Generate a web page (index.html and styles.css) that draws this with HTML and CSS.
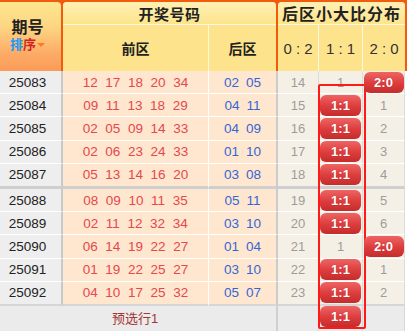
FILE: index.html
```html
<!DOCTYPE html>
<html lang="zh">
<head>
<meta charset="utf-8">
<title>后区小大比分布</title>
<link rel="stylesheet" href="styles.css">
</head>
<body>
<div class="board">
  <div class="head">
    <div class="h-qh">
      <div class="h-qh-title">期号</div>
      <div class="h-sort"><span class="s-blue">排</span><span class="s-red">序</span><span class="tri"></span></div>
    </div>
    <div class="h-group">
      <div class="h-title">开奖号码</div>
      <div class="h-sub">
        <div class="h-cell w-front">前区</div>
        <div class="h-cell w-back">后区</div>
      </div>
    </div>
    <div class="h-group">
      <div class="h-title t-dist">后区小大比分布</div>
      <div class="h-sub">
        <div class="h-cell w-d02 ratio">0 : 2</div>
        <div class="h-cell w-d11 ratio">1 : 1</div>
        <div class="h-cell w-d20 ratio">2 : 0</div>
      </div>
    </div>
  </div>

  <div class="body">
    <div class="row">
      <div class="c-qh">25083</div>
      <div class="c-front"><span>12</span><span>17</span><span>18</span><span>20</span><span>34</span></div>
      <div class="c-back"><span>02</span><span>05</span></div>
      <div class="c-d">14</div>
      <div class="c-d">1</div>
      <div class="c-d"><span class="badge b20">2:0</span></div>
    </div>
    <div class="row">
      <div class="c-qh">25084</div>
      <div class="c-front"><span>09</span><span>11</span><span>13</span><span>18</span><span>29</span></div>
      <div class="c-back"><span>04</span><span>11</span></div>
      <div class="c-d">15</div>
      <div class="c-d"><span class="badge">1:1</span></div>
      <div class="c-d">1</div>
    </div>
    <div class="row">
      <div class="c-qh">25085</div>
      <div class="c-front"><span>02</span><span>05</span><span>09</span><span>14</span><span>33</span></div>
      <div class="c-back"><span>04</span><span>09</span></div>
      <div class="c-d">16</div>
      <div class="c-d"><span class="badge">1:1</span></div>
      <div class="c-d">2</div>
    </div>
    <div class="row">
      <div class="c-qh">25086</div>
      <div class="c-front"><span>02</span><span>06</span><span>23</span><span>24</span><span>33</span></div>
      <div class="c-back"><span>01</span><span>10</span></div>
      <div class="c-d">17</div>
      <div class="c-d"><span class="badge">1:1</span></div>
      <div class="c-d">3</div>
    </div>
    <div class="row sep">
      <div class="c-qh">25087</div>
      <div class="c-front"><span>05</span><span>13</span><span>14</span><span>16</span><span>20</span></div>
      <div class="c-back"><span>03</span><span>08</span></div>
      <div class="c-d">18</div>
      <div class="c-d"><span class="badge">1:1</span></div>
      <div class="c-d">4</div>
    </div>
    <div class="row">
      <div class="c-qh">25088</div>
      <div class="c-front"><span>08</span><span>09</span><span>10</span><span>11</span><span>35</span></div>
      <div class="c-back"><span>05</span><span>11</span></div>
      <div class="c-d">19</div>
      <div class="c-d"><span class="badge">1:1</span></div>
      <div class="c-d">5</div>
    </div>
    <div class="row">
      <div class="c-qh">25089</div>
      <div class="c-front"><span>02</span><span>11</span><span>12</span><span>32</span><span>34</span></div>
      <div class="c-back"><span>03</span><span>10</span></div>
      <div class="c-d">20</div>
      <div class="c-d"><span class="badge">1:1</span></div>
      <div class="c-d">6</div>
    </div>
    <div class="row">
      <div class="c-qh">25090</div>
      <div class="c-front"><span>06</span><span>14</span><span>19</span><span>22</span><span>27</span></div>
      <div class="c-back"><span>01</span><span>04</span></div>
      <div class="c-d">21</div>
      <div class="c-d">1</div>
      <div class="c-d"><span class="badge b20">2:0</span></div>
    </div>
    <div class="row">
      <div class="c-qh">25091</div>
      <div class="c-front"><span>01</span><span>19</span><span>22</span><span>25</span><span>27</span></div>
      <div class="c-back"><span>03</span><span>10</span></div>
      <div class="c-d">22</div>
      <div class="c-d"><span class="badge">1:1</span></div>
      <div class="c-d">1</div>
    </div>
    <div class="row last">
      <div class="c-qh">25092</div>
      <div class="c-front"><span>04</span><span>10</span><span>17</span><span>25</span><span>32</span></div>
      <div class="c-back"><span>05</span><span>07</span></div>
      <div class="c-d">23</div>
      <div class="c-d"><span class="badge">1:1</span></div>
      <div class="c-d">2</div>
    </div>
    <div class="foot">
      <div class="f-label">预选行1</div>
      <div class="f-d"></div>
      <div class="f-d"><span class="badge">1:1</span></div>
      <div class="f-d"></div>
    </div>
  </div>

  <div class="mark"></div>
</div>
</body>
</html>
```

FILE: styles.css
```css
* { box-sizing: border-box; }
html, body { margin: 0; padding: 0; background: #fff; }
body {
  font-family: "Liberation Sans", "Noto Sans CJK SC", sans-serif;
  width: 407px;
  height: 331px;
  overflow: hidden;
}
.board { position: relative; width: 407px; }

/* ---------- header ---------- */
.head {
  display: grid;
  grid-template-columns: 61px 213px 127px;
  column-gap: 2px;
  height: 71px;
  padding-top: 2px;
  background: #f25a0c;
}
.h-qh {
  border-radius: 0 4px 0 0;
  background: linear-gradient(#fde78e 0%, #fdd683 35%, #fcab66 75%, #fc9a58 100%);
  display: flex;
  flex-direction: column;
  align-items: center;
  justify-content: center;
  padding: 0 6px 3px 0;
  font-weight: bold;
}
.h-qh-title { font-size: 16px; line-height: 19px; color: #222; }
.h-sort { font-size: 13px; line-height: 16px; display: flex; align-items: center; }
.s-blue { color: #2196f3; }
.s-red { color: #d32424; }
.tri {
  width: 0; height: 0;
  margin-left: 1px;
  border-left: 4px solid transparent;
  border-right: 4px solid transparent;
  border-top: 4px solid #ff7a1e;
}
.h-group {
  display: flex;
  flex-direction: column;
  gap: 1px;
  background: #fff8e0;
  border-radius: 4px 4px 0 0;
  overflow: hidden;
}
.h-title {
  height: 22px;
  background: linear-gradient(#fff0b4, #fde58c);
  display: flex;
  align-items: center;
  justify-content: center;
  font-size: 15px;
  font-weight: bold;
  letter-spacing: 0.5px;
  color: #222;
}
.t-dist { font-size: 16px; letter-spacing: 1px; }
.h-sub { flex: 1; display: flex; gap: 1px; }
.h-cell {
  background: #fde48c;
  display: flex;
  align-items: center;
  justify-content: center;
  font-size: 14px;
  font-weight: bold;
  color: #222;
}
.h-cell.ratio { font-weight: normal; font-size: 15px; color: #333; }
.w-front { width: 145px; }
.w-back { width: 67px; }
.w-d02 { width: 40px; }
.w-d11 { width: 43px; }
.w-d20 { width: 42px; }

/* ---------- body ---------- */
.body { width: 405px; }
.row {
  display: grid;
  grid-template-columns: 63px 146px 69px 41px 44px 42px;
  height: 23.2px;
}
.row > div {
  border-bottom: 1px solid #fff;
  display: flex;
  align-items: center;
  justify-content: center;
  font-size: 13.5px;
}
.row.sep { height: 25.2px; }
.row.sep > div { border-bottom: 3px solid #cfcfcf; }
.row.last > div { border-bottom: 2px solid #d6d6d6; }
.row.last { height: 24.2px; }

.c-qh {
  background: #eeeeee;
  border-right: 2px solid #c9c9c9;
  padding-right: 6px;
  color: #222;
}
.c-front, .c-back { background: #ffe6cf; }
.c-front { border-right: 1px solid #fff; color: #e5484d; }
.c-back { border-right: 2px solid #cbcbcb; color: #3567d4; }
.c-front span, .c-back span { margin: 0 3.8px; }
.c-back span { margin: 0 3.4px; }
.c-d {
  background: #f5f0e6;
  border-right: 1px solid #dcdcdc;
  color: #9c9c9c;
}
.row > .c-d { font-size: 13px; }

.badge {
  display: block;
  width: 41px;
  height: 21px;
  line-height: 21px;
  border-radius: 6px;
  background: linear-gradient(#ef6464 0%, #dc3c3c 55%, #c52c2c 100%);
  color: #fff;
  font-weight: bold;
  font-size: 13px;
  text-align: center;
  text-shadow: 0 0 1px rgba(120, 0, 0, 0.4);
}
.badge.b20 { width: 40px; position: relative; z-index: 3; }

.foot {
  display: grid;
  grid-template-columns: 278px 41px 44px 42px;
  height: 26px;
  background: #ebebeb;
}
.f-label {
  border-right: 2px solid #d0d0d0;
  display: flex;
  align-items: center;
  justify-content: center;
  padding: 0 6px 2px 0;
  font-size: 13px;
  color: #a23636;
}
.f-d {
  border-right: 1px solid #d8d8d8;
  display: flex;
  justify-content: center;
  padding-top: 0;
}

/* highlight box over the 1:1 column */
.mark {
  position: absolute;
  left: 318px;
  top: 84px;
  width: 48px;
  height: 245px;
  border: 2px solid #ff1a1a;
  border-radius: 2px;
  z-index: 2;
}
```
